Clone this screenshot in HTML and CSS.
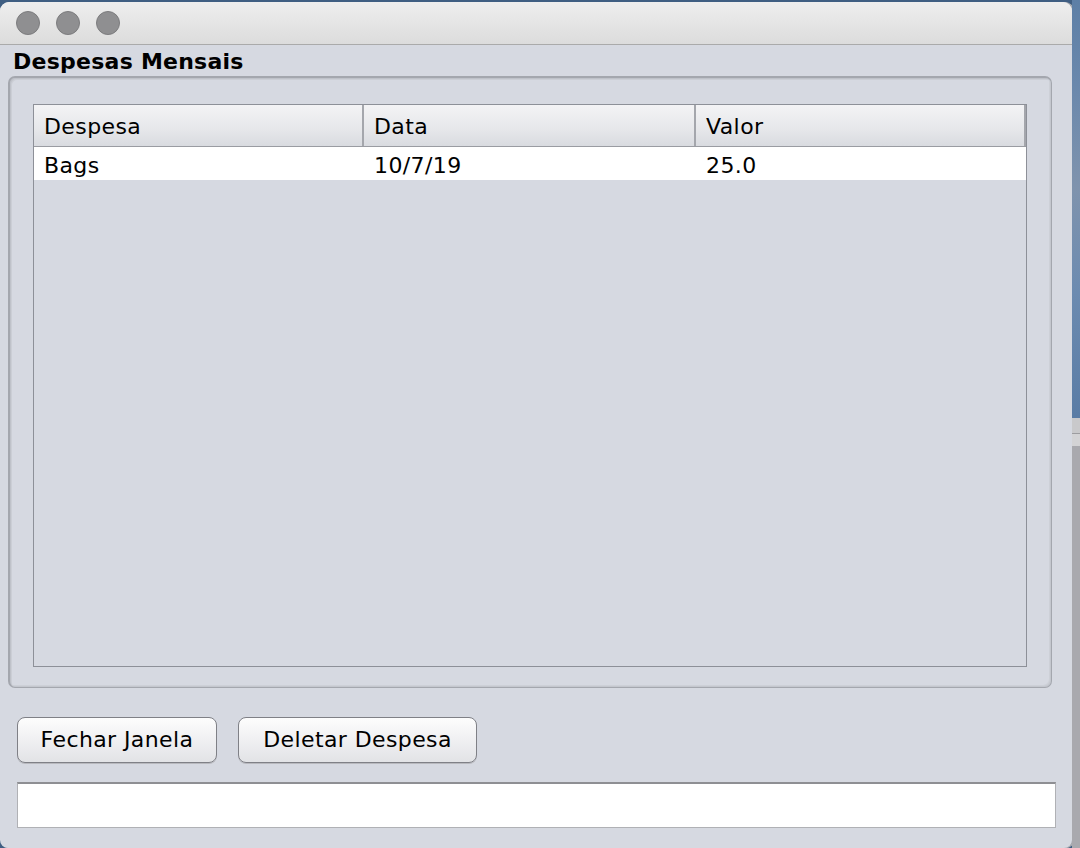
FILE: index.html
```html
<!DOCTYPE html>
<html>
<head>
<meta charset="utf-8">
<link rel="stylesheet" href="styles.css">
</head>
<body>
<div class="screen">
  <div class="window">
    <div class="titlebar">
      <span class="light"></span><span class="light"></span><span class="light"></span>
    </div>
    <div class="content">
      <div class="title">Despesas Mensais</div>
      <div class="panel">
        <div class="table">
          <div class="thead">
            <div class="th c1">Despesa</div>
            <div class="th c2">Data</div>
            <div class="th c3">Valor</div>
          </div>
          <div class="tr">
            <div class="td c1">Bags</div>
            <div class="td c2">10/7/19</div>
            <div class="td c3">25.0</div>
          </div>
        </div>
      </div>
      <div class="buttons">
        <button class="btn b1">Fechar Janela</button>
        <button class="btn b2">Deletar Despesa</button>
      </div>
      <div class="field"></div>
    </div>
  </div>
  <div class="desk">
    <div class="sky"></div>
    <div class="bar1"></div>
    <div class="bar2"></div>
    <div class="rest"></div>
  </div>
</div>
</body>
</html>
```

FILE: styles.css
```css
* { box-sizing: border-box; }
html, body { margin: 0; padding: 0; }
body {
  width: 1080px;
  height: 848px;
  overflow: hidden;
  background: #4f6f95;
  font-family: "DejaVu Sans", "Liberation Sans", sans-serif;
  color: #000;
}
.screen {
  display: flex;
  width: 1080px;
  height: 848px;
  background: #3f5e82;
}
.window {
  width: 1072px;
  height: 846px;
  margin-top: 2px;
  display: flex;
  flex-direction: column;
  background: #d6d9e1;
  border-radius: 9px 9px 8px 8px;
  box-shadow: 1px 0 0 #a0a2a8, 2px 0 0 #b4b6ba;
  overflow: hidden;
}
.titlebar {
  height: 43px;
  flex: none;
  display: flex;
  align-items: center;
  gap: 16px;
  padding-left: 16px;
  padding-bottom: 1px;
  background: linear-gradient(#eeeeee, #dcdcdc);
  border-bottom: 1px solid #aaaaaa;
}
.light {
  width: 24px;
  height: 24px;
  border-radius: 50%;
  background: #8f8f91;
  border: 1px solid #7c7c7e;
}
.content {
  flex: 1;
  display: flex;
  flex-direction: column;
  padding-left: 8px;
}
.title {
  font-weight: bold;
  font-size: 22px;
  letter-spacing: 0.25px;
  line-height: 26px;
  margin-top: 4px;
  margin-left: 5px;
  height: 27px;
}
.panel {
  width: 1044px;
  height: 612px;
  padding: 26px 23px 19px 23px;
  border: 1px solid #a4a7ae;
  border-radius: 7px;
  border-top-width: 2px;
  border-left-width: 2px;
  box-shadow: inset 1px 1px 0 #bfc2c9, inset 2px 2px 0 #cbced5, inset -1px -1px 0 #c4c7ce, inset -2px -2px 0 #cdd0d7;
  background: #d6d9e1;
}
.table {
  width: 994px;
  height: 563px;
  border: 1px solid #8d9098;
  background: #d6d9e1;
}
.thead {
  display: flex;
  height: 42px;
  background: linear-gradient(#f3f3f5, #e6e7ea 60%, #d9dbe0);
  border-bottom: 1px solid #9a9ca2;
}
.th, .td {
  font-size: 22px;
  letter-spacing: 0.4px;
  padding-left: 10px;
  white-space: nowrap;
}
.th {
  line-height: 44px;
  border-right: 2px solid #a4a6ac;
}
.c1 { width: 330px; }
.c2 { width: 332px; }
.c3 { width: 330px; }
.tr {
  display: flex;
  height: 33px;
  background: #ffffff;
}
.td { line-height: 38px; }
.buttons {
  display: flex;
  gap: 21px;
  margin-top: 29px;
  margin-left: 9px;
  height: 46px;
}
.btn {
  height: 46px;
  font-family: "DejaVu Sans", "Liberation Sans", sans-serif;
  font-size: 22px;
  letter-spacing: 0.4px;
  color: #000;
  border: 1px solid #7f8086;
  border-radius: 8px;
  background: linear-gradient(#fdfdfd, #f1f1f3 45%, #e2e3e6);
  box-shadow: 0 1px 0 #b8b9be;
  padding: 0 0 2px 0;
}
.b1 { width: 200px; }
.b2 { width: 239px; }
.field {
  margin-top: 19px;
  margin-left: 9px;
  width: 1039px;
  height: 46px;
  background: #ffffff;
  border: 1px solid #b0b1b5;
  border-top: 2px solid #8e8f93;
}
.desk {
  width: 8px;
  display: flex;
  flex-direction: column;
}
.sky {
  height: 418px;
  background: linear-gradient(#5d7fa6, #6a88ac 20%, #7f93ad 45%, #6c8bb0 70%, #5a7ca5);
}
.bar1 { height: 16px; background: #c9c9cb; border-bottom: 1px solid #9d9da0; }
.bar2 { height: 12px; background: #d3d3d5; }
.rest { flex: 1; background: #a9a9ae; }
```
